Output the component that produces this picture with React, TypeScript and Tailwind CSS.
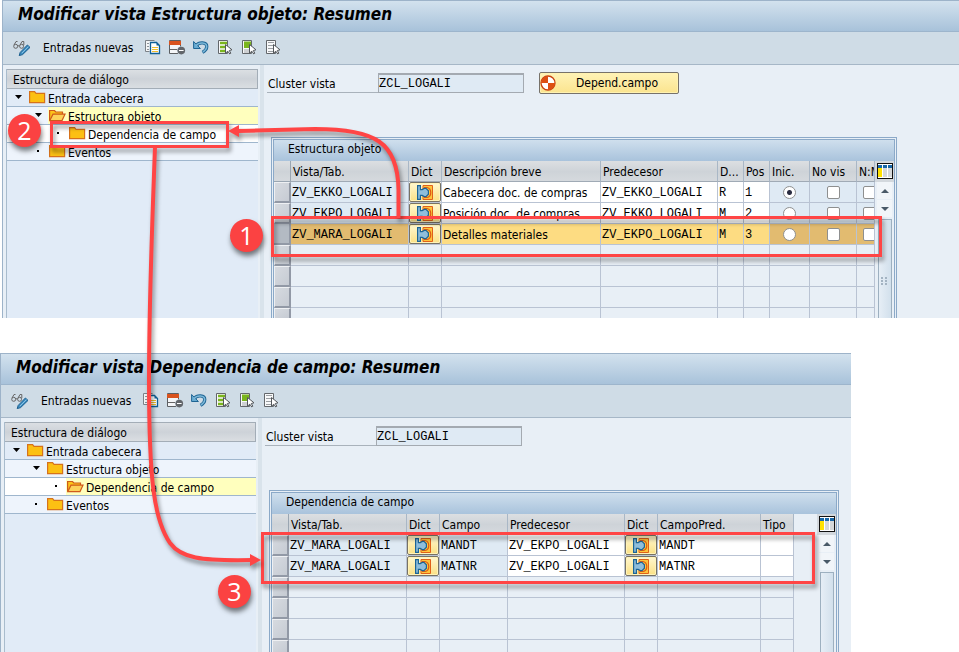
import React from "react";

const UI = "font-['DejaVu_Sans_Condensed','DejaVu_Sans',sans-serif]";
const MONO = "font-['Liberation_Mono',monospace]";
const LINE = "border-[#b9c3d3]";

/* ---------- icons ---------- */

function EditIcon() {
  return (
    <svg width="18" height="17" viewBox="0 0 18 17" fill="none">
      <circle cx="2.7" cy="6.3" r="2" stroke="#666" />
      <circle cx="8.6" cy="6.3" r="2" stroke="#666" />
      <path d="M1 5 L3 1.5 H4.5 M7 5 L9 1.5 H10.8 V5 M4.6 5.8 H6.6" stroke="#666" />
      <path d="M6.2 15.6 L7.2 12.4 L14.4 5 L17 7.4 L9.6 14.6 Z" fill="#3c8cc0" stroke="#1c5f8e" />
      <path d="M8.8 13.2 L15.4 6.6" stroke="#8cc4e4" />
    </svg>
  );
}

function CopyIcon() {
  return (
    <svg width="16" height="15" viewBox="0 0 16 15" fill="none">
      <path d="M4.5 11.5 H0.5 V0.5 H9.5" fill="#f4f5f6" stroke="#7c8288" />
      <path d="M2 3.5 H4 M2 6.5 H4 M2 9.5 H4" stroke="#8d9399" />
      <path d="M5.5 2.5 H11.5 L14.5 5.5 V13.5 H5.5 Z" fill="#fff" stroke="#0f5f96" strokeWidth="1.3" />
      <path d="M11.5 2.5 V5.5 H14.5 Z" fill="#0f5f96" />
      <path d="M7 7.5 H13 M7 9.5 H13 M7 11.5 H13" stroke="#f0bd2c" />
    </svg>
  );
}

function DeleteRowIcon() {
  return (
    <svg width="17" height="15" viewBox="0 0 17 15" fill="none">
      <path d="M0.5 0.5 H11.5 V13.5 H0.5 Z" fill="#f4f6f8" stroke="#5c5f62" />
      <rect x="0" y="1" width="12" height="4" fill="#d9531e" />
      <path d="M1 9.5 H9" stroke="#666" />
      <circle cx="12.3" cy="10.6" r="4.4" fill="#cfdce6" />
      <circle cx="12.3" cy="10.6" r="3.8" fill="#62666b" />
      <path d="M10 10.5 H14.6" stroke="#fff" />
    </svg>
  );
}

function UndoIcon() {
  return (
    <svg width="16" height="14" viewBox="0 0 16 14" fill="none">
      <path d="M3.5 5.5 C6 1.8 13.8 2 13.8 6.6 C13.8 9 12 11 9.5 12.4" stroke="#1f6594" strokeWidth="3.2" />
      <path d="M0.6 1.5 V8.5 H7.4 Z" fill="#69acd2" stroke="#1f6594" />
      <path d="M3 5.8 C6 1.9 13.6 2.2 13.7 6.6 C13.7 9 12 10.8 9.8 12" stroke="#7db9da" strokeWidth="1.5" />
    </svg>
  );
}

function SelectIcon({ mode }: { mode: "all" | "block" | "none" }) {
  const tone = mode === "none" ? "#9b9fa3" : "#7ab51d";
  return (
    <svg width="15" height="15" viewBox="0 0 15 15" fill="none">
      <path d="M0.5 0.5 H9.5 V13.5 H0.5 Z" fill="#f8f9fa" stroke="#63676b" />
      {mode === "all" && <path d="M2 3 H9 M2 7 H7 M2 11 H7" stroke={tone} strokeWidth="2.6" />}
      {mode === "block" && (
        <>
          <rect x="2" y="1.5" width="7" height="6.5" fill={tone} />
          <path d="M2 10 H7 M2 12 H7" stroke="#a4a8ac" />
        </>
      )}
      {mode === "none" && <path d="M2 2.5 H8 M2 5.5 H7 M2 8.5 H7 M2 11.5 H7" stroke={tone} />}
      <path d="M7.5 4.5 V13.2 L9.8 11.2 L11.8 14 L12.8 13.2 L11.3 10.5 L14 9.8 Z" fill="#fff" stroke="#53575b" />
    </svg>
  );
}

function FolderIcon({ open = false }: { open?: boolean }) {
  return (
    <svg width="17" height="13" viewBox="0 0 17 13" fill="none" className="shrink-0">
      {open ? (
        <>
          <path d="M0.6 11.5 V1.5 H5.5 L6.8 3 H13.5 V5" fill="#fcc419" stroke="#cf5a1b" strokeWidth="1.2" />
          <path d="M0.8 11.6 L4 5.2 H16 L13 11.6 Z" fill="#fcd25a" stroke="#cf5a1b" strokeWidth="1.2" />
        </>
      ) : (
        <path d="M0.6 11.6 V0.6 H5.6 L7 2.4 H15.6 V11.6 Z" fill="#fcc013" stroke="#d6721c" strokeWidth="1.2" />
      )}
    </svg>
  );
}

function DictIcon() {
  return (
    <svg width="16" height="15" viewBox="0 0 16 15" fill="none">
      <path d="M6 0.5 H15.5 V14.5 H6 V11 H9 V4 H6 Z" fill="#fdc43a" stroke="#e0601a" />
      <path d="M7 2.5 H10 C15 3.4 15 11.6 10 12.5 H7" stroke="#dc5a16" strokeWidth="1.2" />
      <path
        d="M0.6 0.6 H3.4 V4.6 H5.2 L7.2 3.4 H9 L11.4 5.8 V9.2 L9 11.6 H7.2 L5.2 10.4 H3.4 V14.4 H0.6 Z"
        fill="#8fbedb"
        stroke="#1c6596"
        strokeWidth="1.2"
      />
    </svg>
  );
}

function DependIcon() {
  return (
    <svg width="16" height="16" viewBox="0 0 16 16">
      <circle cx="8" cy="8" r="7" fill="#fff" stroke="#c9410f" strokeWidth="1.3" />
      <path d="M8 8 V1 A7 7 0 0 0 1 8 Z M8 8 V15 A7 7 0 0 0 15 8 Z" fill="#dd5013" />
    </svg>
  );
}

function ColumnsIcon() {
  return (
    <svg width="16" height="16" viewBox="0 0 16 16" className="shrink-0">
      <rect width="16" height="16" fill="#111" />
      <rect x="1" y="1" width="14" height="14" fill="#fff" />
      <rect x="1" y="2" width="14" height="3" fill="#1767a8" />
      <rect x="1" y="5" width="4" height="9" fill="#ffe100" />
      <rect x="6" y="5" width="4" height="9" fill="#d5d8da" />
      <rect x="11" y="5" width="4" height="9" fill="#d5d8da" />
      <path d="M5.5 2 V14 M10.5 2 V14" stroke="#fff" />
    </svg>
  );
}

/* ---------- tree ---------- */

type Node = { label: string; depth: 0 | 1 | 2; leaf?: boolean; open?: boolean };
const indent = { 0: "w-0", 1: "w-5", 2: "w-10" };

function Tree({ nodes }: { nodes: Node[] }) {
  return (
    <aside className="w-[252px] shrink-0 border-l border-[#a9bccd] bg-[#e1ebf7]">
      <h2 className="h-5 border border-l-0 border-[#a3adb7] bg-linear-to-b from-[#dbdfe3] via-[#cdd2d8] to-[#dadee2] pl-[6px] leading-5">
        Estructura de diálogo
      </h2>
      <ul>
        {nodes.map((n) => (
          <li
            key={n.label}
            className={`flex h-[18px] border-b border-[#9fb6cd] ${
              n.depth === 0 ? "bg-[#e1ebf7]" : n.depth === 1 ? "bg-[#eef4fc]" : "bg-white"
            }`}
          >
            <span className={indent[n.depth]} />
            <span className="flex w-[21px] shrink-0 items-center justify-center pb-[2px] pl-px">
              {n.leaf ? (
                <span className="size-[2px] bg-black" />
              ) : (
                <svg width="7" height="4" viewBox="0 0 7 4"><path d="M0 0 H7 L3.5 4 Z" /></svg>
              )}
            </span>
            <span className={`flex grow gap-[2px] pl-px leading-5 ${n.open ? "bg-[#ffffbe]" : ""}`}>
              <span className="h-4 pt-[2px] leading-none"><FolderIcon open={n.open} /></span>
              {n.label}
            </span>
          </li>
        ))}
      </ul>
    </aside>
  );
}

/* ---------- grid ---------- */

type Kind = "key" | "mono" | "text" | "dict" | "radio" | "check";
type Column = { title: string; width: string; kind: Kind };
type Cell = string | boolean;

const cellTone = (kind: Kind, selected: boolean, filled: boolean) => {
  if (!filled) return "";
  const locked = kind === "key" || kind === "radio" || kind === "check";
  if (selected) return locked ? "bg-[#e2bb70]" : "bg-[#fddc82]";
  return locked ? "bg-[#dfeaf4]" : "bg-white";
};

const cellFont: Record<Kind, string> = {
  key: `${MONO} pl-px pt-[2px]`,
  mono: `${MONO} pl-px pt-[2px]`,
  text: "pl-px pt-[2px]",
  dict: "",
  radio: "",
  check: "",
};

function CellBody({ kind, value, name }: { kind: Kind; value: Cell; name: string }) {
  if (kind === "dict")
    return (
      <button
        aria-label={name}
        className="flex h-5 w-8 items-center justify-center rounded-[2px] border border-[#777265] bg-linear-to-b from-[#fff7cf] to-[#fbe184] shadow-[inset_0_0_0_1px_#fff3b8]"
      >
        <DictIcon />
      </button>
    );
  if (kind === "radio")
    return (
      <input
        type="radio"
        aria-label={name}
        defaultChecked={value === true}
        className="mx-auto block size-[13px] appearance-none rounded-full border border-[#8e8f8f] bg-white checked:bg-[radial-gradient(circle,#2a2c40_0_2px,#fff_3px)]"
      />
    );
  if (kind === "check")
    return (
      <div className="min-w-6">
        <input
          type="checkbox"
          aria-label={name}
          className="mx-auto block size-[13px] appearance-none rounded-[2px] border border-[#8e8f8f] bg-white"
        />
      </div>
    );
  return <>{value}</>;
}

function Grid({
  title,
  columns,
  rows,
  selected,
  empties,
  width,
  spacer,
  tail,
}: {
  title: string;
  columns: Column[];
  rows: Cell[][];
  selected?: number;
  empties: number;
  width: string;
  spacer: string;
  tail: string;
}) {
  const body: (Cell[] | null)[] = [...rows, ...Array(empties).fill(null)];
  const last = body.length - 1;
  return (
    <section className="w-fit border-3 border-b-0 border-double border-[#8ba9c8]">
      <h2 className="h-[21px] bg-linear-to-b from-[#cfdfed] to-[#a9c3dc] pl-[14px] leading-[18px]">{title}</h2>
      <div className="flex">
        <table className={`table-fixed border-separate border-spacing-0 ${width}`}>
          <colgroup>
            <col className="w-[17px]" />
            {columns.map((c, i) => (
              <col key={i} className={c.width} />
            ))}
          </colgroup>
          <thead>
            <tr className="h-[21px] bg-linear-to-b from-[#dcdfe2] via-[#ced3d8] to-[#d6dade]">
              <th className="border-r border-b border-[#9aa6b2] p-0" aria-label="Selección" />
              {columns.map((c, i) => (
                <th
                  key={i}
                  className="overflow-hidden border-r border-b border-r-[#a9b7c6] border-b-[#a0aab5] p-0 pt-[2px] pl-[2px] text-left leading-4 font-normal whitespace-nowrap"
                >
                  {c.title}
                </th>
              ))}
            </tr>
          </thead>
          <tbody>
            {body.map((row, r) => (
              <tr key={r} className={r === last ? tail : "h-[21px]"}>
                <td
                  className={`border-r-2 border-[#9299a6] p-0 ${r === last ? "" : "border-b-2"} ${
                    r === selected
                      ? "bg-[#b3bac3]"
                      : "border-t border-l border-t-[#eef0f3] border-l-[#eef0f3] bg-linear-to-br from-[#d6dae0] to-[#c6cbd3]"
                  }`}
                />
                {columns.map((c, i) => (
                  <td
                    key={i}
                    className={`overflow-hidden border-r p-0 leading-4 whitespace-nowrap ${LINE} ${
                      r === last ? "" : "border-b"
                    } ${row ? cellFont[c.kind] : ""} ${cellTone(c.kind, r === selected, row !== null)}`}
                  >
                    {row && <CellBody kind={c.kind} value={row[i]} name={`${c.title} ${r + 1}`} />}
                  </td>
                ))}
              </tr>
            ))}
          </tbody>
        </table>
        <div className={spacer} />
        <div className="flex w-[19px] flex-col items-center">
          <button aria-label="Configuración" className="flex h-[21px] w-full items-center justify-center bg-[#d3d8dd] pb-px">
            <ColumnsIcon />
          </button>
          <button aria-label="Subir" className="flex h-[17px] w-[15px] items-center justify-center bg-[#f1f5f9]">
            <svg width="8" height="4" viewBox="0 0 8 4" fill="#4a5a68"><path d="M0 4 L4 0 L8 4 Z" /></svg>
          </button>
          <button aria-label="Bajar" className="mt-px flex h-[17px] w-[15px] items-center justify-center bg-[#f1f5f9]">
            <svg width="8" height="4" viewBox="0 0 8 4" fill="#4a5a68"><path d="M0 0 L4 4 L8 0 Z" /></svg>
          </button>
          <div className="mt-[2px] flex w-[14px] grow justify-center border border-b-0 border-[#9db0c0] bg-linear-to-r from-[#e6eef6] to-[#d2e0ec] pt-[57px]">
            {selected !== undefined && (
              <svg width="7" height="9" viewBox="0 0 7 9" fill="#a3b3c2">
                <path d="M0 0h2v2H0zM4 0h2v2H4zM0 3h2v2H0zM4 3h2v2H4zM0 6h2v2H0zM4 6h2v2H4z" />
              </svg>
            )}
          </div>
        </div>
      </div>
    </section>
  );
}

/* ---------- window ---------- */

function Screen({
  id,
  title,
  nodes,
  action,
  children,
}: {
  id: string;
  title: string;
  nodes: Node[];
  action?: React.ReactNode;
  children: React.ReactNode;
}) {
  return (
    <div className="overflow-hidden border-t border-l border-[#9db3c9] bg-[#e8eff6]">
      <header className="h-[31px] border-b border-[#9db5cc] bg-linear-to-b from-[#d3e2ee] to-[#a8c2da] pl-[15px] text-[17px] leading-[27px] font-bold italic">
        {title}
      </header>
      <div className="flex h-[33px] items-center border-b border-[#a6b7c7] bg-[#cfdce6] pl-[10px]">
        <button aria-label="Visualizar o modificar"><EditIcon /></button>
        <button className="ml-3 w-[102px] text-left">Entradas nuevas</button>
        <div className="flex items-center gap-2 pb-[2px]">
          <button aria-label="Copiar como" className="w-4"><CopyIcon /></button>
          <button aria-label="Borrar" className="w-4"><DeleteRowIcon /></button>
          <button aria-label="Deshacer" className="w-4"><UndoIcon /></button>
          <button aria-label="Marcar todo" className="ml-px w-4"><SelectIcon mode="all" /></button>
          <button aria-label="Marcar bloque" className="w-4"><SelectIcon mode="block" /></button>
          <button aria-label="Desmarcar todo" className="w-4"><SelectIcon mode="none" /></button>
        </div>
      </div>
      <div className="flex pt-1 pl-[3px]">
        <Tree nodes={nodes} />
        <div className="-mt-1 ml-[2px] w-1 shrink-0 bg-[#d9e3eb]" />
        <main className="grow pt-[3px] pl-[3px]">
          <div className="flex h-[22px]">
            <label htmlFor={id} className="mb-px w-[111px] border-b border-[#a9b2bb] pt-[3px] pl-px">
              Cluster vista
            </label>
            <input
              id={id}
              readOnly
              defaultValue="ZCL_LOGALI"
              className={`mt-px h-5 w-[146px] border border-t-2 border-[#a4aab1] bg-[#dfeaf4] text-[12px] outline-none ${MONO}`}
            />
            {action}
          </div>
          <div className="mt-[43px] ml-1">{children}</div>
        </main>
      </div>
    </div>
  );
}

const topNodes: Node[] = [
  { label: "Entrada cabecera", depth: 0 },
  { label: "Estructura objeto", depth: 1, open: true },
  { label: "Dependencia de campo", depth: 2, leaf: true },
  { label: "Eventos", depth: 1, leaf: true },
];
const bottomNodes: Node[] = [
  { label: "Entrada cabecera", depth: 0 },
  { label: "Estructura objeto", depth: 1 },
  { label: "Dependencia de campo", depth: 2, leaf: true, open: true },
  { label: "Eventos", depth: 1, leaf: true },
];

const objectColumns: Column[] = [
  { title: "Vista/Tab.", width: "w-[118px]", kind: "key" },
  { title: "Dict", width: "w-[33px]", kind: "dict" },
  { title: "Descripción breve", width: "w-[159px]", kind: "text" },
  { title: "Predecesor", width: "w-[117px]", kind: "mono" },
  { title: "D...", width: "w-[26px]", kind: "mono" },
  { title: "Pos", width: "w-[26px]", kind: "mono" },
  { title: "Inic.", width: "w-[40px]", kind: "radio" },
  { title: "No vis", width: "w-[47px]", kind: "check" },
  { title: "N:M", width: "w-[18px]", kind: "check" },
];
const objectRows: Cell[][] = [
  ["ZV_EKKO_LOGALI", "", "Cabecera doc. de compras", "ZV_EKKO_LOGALI", "R", "1", true, false, false],
  ["ZV_EKPO_LOGALI", "", "Posición doc. de compras", "ZV_EKKO_LOGALI", "M", "2", false, false, false],
  ["ZV_MARA_LOGALI", "", "Detalles materiales", "ZV_EKPO_LOGALI", "M", "3", false, false, false],
];

const fieldColumns: Column[] = [
  { title: "Vista/Tab.", width: "w-[118px]", kind: "key" },
  { title: "Dict", width: "w-[33px]", kind: "dict" },
  { title: "Campo", width: "w-[68px]", kind: "key" },
  { title: "Predecesor", width: "w-[117px]", kind: "mono" },
  { title: "Dict", width: "w-[33px]", kind: "dict" },
  { title: "CampoPred.", width: "w-[103px]", kind: "mono" },
  { title: "Tipo", width: "w-[33px]", kind: "mono" },
];
const fieldRows: Cell[][] = [
  ["ZV_MARA_LOGALI", "", "MANDT", "ZV_EKPO_LOGALI", "", "MANDT", ""],
  ["ZV_MARA_LOGALI", "", "MATNR", "ZV_EKPO_LOGALI", "", "MATNR", ""],
];

/* ---------- annotations ---------- */

function Mark({ place }: { place: string }) {
  return (
    <div
      className={`pointer-events-none absolute border-3 border-[#ff4545] drop-shadow-[2px_4px_2px_rgba(0,0,0,0.4)] ${place}`}
    />
  );
}

function Badge({ n, place }: { n: number; place: string }) {
  return (
    <div
      className={`absolute flex size-[33px] items-center justify-center rounded-full bg-[#fb4242] font-['Open_Sans',sans-serif] text-[25px] leading-none text-white shadow-[1px_4px_5px_rgba(0,0,0,0.5)] ${place}`}
    >
      {n}
    </div>
  );
}

export default function App() {
  return (
    <div className={`relative overflow-hidden bg-white text-[12px] text-black ${UI}`}>
      <div className="pl-[2px]">
        <Screen
          id="cluster-objeto"
          title="Modificar vista Estructura objeto: Resumen"
          nodes={topNodes}
          action={
            <button className="ml-[15px] flex h-[22px] w-[140px] items-center rounded-[2px] border border-[#77726a] bg-linear-to-b from-[#fff3b6] to-[#fbe48e] shadow-[inset_0_0_0_1px_#fff2b0]">
              <DependIcon />
              <span className="grow text-center">Depend.campo</span>
            </button>
          }
        >
          <Grid
            title="Estructura objeto"
            columns={objectColumns}
            rows={objectRows}
            selected={2}
            empties={4}
            width="w-[601px]"
            spacer="w-0"
            tail="h-[10px]"
          />
        </Screen>
      </div>
      <div className="mt-[35px] mr-[108px]">
        <Screen
          id="cluster-campo"
          title="Modificar vista Dependencia de campo: Resumen"
          nodes={bottomNodes}
        >
          <Grid
            title="Dependencia de campo"
            columns={fieldColumns}
            rows={fieldRows}
            empties={4}
            width="w-[522px]"
            spacer="w-[23px]"
            tail="h-[12px]"
          />
        </Screen>
      </div>

      <Mark place="left-[50px] top-[121px] h-[27px] w-[179px]" />
      <Mark place="left-[271px] top-[216px] h-[41px] w-[611px]" />
      <Mark place="left-[261px] top-[532px] h-[52px] w-[554px]" />
      <svg
        className="pointer-events-none absolute top-0 left-0 drop-shadow-[2px_4px_2px_rgba(0,0,0,0.4)]"
        width="420"
        height="600"
        viewBox="0 0 420 600"
        fill="none"
      >
        <path d="M398.5 218 V190 C398 142 375 129 315 129 L238 131" stroke="#ff4545" strokeWidth="4" />
        <path d="M228 131 L239 125 V137 Z" fill="#ff4545" />
        <path d="M155 147 C152 230 149 300 149 380 C149 480 154 520 170 543 C181 558 200 561 252 560" stroke="#ff4545" strokeWidth="4" />
        <path d="M261 560 L250 554 V566 Z" fill="#ff4545" />
      </svg>
      <Badge n={1} place="left-[230px] top-[219px]" />
      <Badge n={2} place="left-[8px] top-[114px]" />
      <Badge n={3} place="left-[218px] top-[575px]" />
    </div>
  );
}
